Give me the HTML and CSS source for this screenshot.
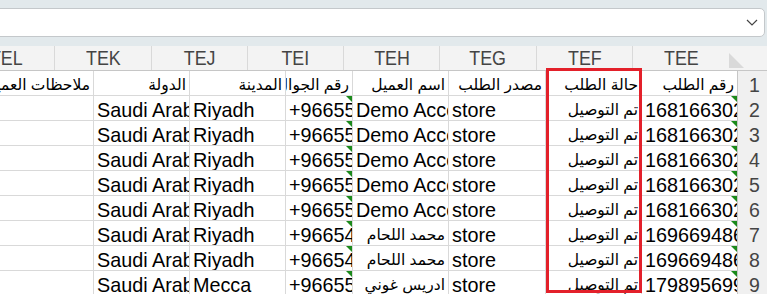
FILE: index.html
```html
<!DOCTYPE html>
<html lang="ar">
  <head>
    <meta charset="UTF-8" />
    <meta name="viewport" content="width=device-width, initial-scale=1.0" />
    <title>Sheet</title>
    <link rel="stylesheet" href="styles.css">
  </head>
  <body>
    <div class="topbar">
      <div class="formula-box">
        <svg class="chevron" width="12" height="7" viewBox="0 0 12 7">
          <polyline points="1,1 6,6 11,1" fill="none" stroke="#444" stroke-width="1.2" />
        </svg>
      </div>
    </div>

    <div class="sheet-wrap">
      <div class="col-heads" dir="rtl">
        <div class="corner">
          <svg width="15" height="15" viewBox="0 0 15 15">
            <polygon points="0,0 0,15 15,15" fill="#d9d9d9" />
          </svg>
        </div>
        <div class="col-head"><span>TEE</span></div>
        <div class="col-head"><span>TEF</span></div>
        <div class="col-head"><span>TEG</span></div>
        <div class="col-head"><span>TEH</span></div>
        <div class="col-head"><span>TEI</span></div>
        <div class="col-head"><span>TEJ</span></div>
        <div class="col-head"><span>TEK</span></div>
        <div class="col-head"><span>TEL</span></div>
      </div>

      <div class="sheet" dir="rtl">
        <!-- row 1: field names -->
        <div class="row-num">1</div>
        <div class="cell ar">رقم الطلب</div>
        <div class="cell ar">حالة الطلب</div>
        <div class="cell ar">مصدر الطلب</div>
        <div class="cell ar">اسم العميل</div>
        <div class="cell ar">رقم الجوال</div>
        <div class="cell ar">المدينة</div>
        <div class="cell ar">الدولة</div>
        <div class="cell ar">ملاحظات العميل</div>

        <div class="row-num">2</div>
        <div class="cell lt flag">1681663021</div>
        <div class="cell ar">تم التوصيل</div>
        <div class="cell lt">store</div>
        <div class="cell lt">Demo Account</div>
        <div class="cell lt flag">+966551234567</div>
        <div class="cell lt">Riyadh</div>
        <div class="cell lt">Saudi Arabia</div>
        <div class="cell"></div>

        <div class="row-num">3</div>
        <div class="cell lt flag">1681663024</div>
        <div class="cell ar">تم التوصيل</div>
        <div class="cell lt">store</div>
        <div class="cell lt">Demo Account</div>
        <div class="cell lt flag">+966551234567</div>
        <div class="cell lt">Riyadh</div>
        <div class="cell lt">Saudi Arabia</div>
        <div class="cell"></div>

        <div class="row-num">4</div>
        <div class="cell lt flag">1681663027</div>
        <div class="cell ar">تم التوصيل</div>
        <div class="cell lt">store</div>
        <div class="cell lt">Demo Account</div>
        <div class="cell lt flag">+966551234567</div>
        <div class="cell lt">Riyadh</div>
        <div class="cell lt">Saudi Arabia</div>
        <div class="cell"></div>

        <div class="row-num">5</div>
        <div class="cell lt flag">1681663029</div>
        <div class="cell ar">تم التوصيل</div>
        <div class="cell lt">store</div>
        <div class="cell lt">Demo Account</div>
        <div class="cell lt flag">+966551234567</div>
        <div class="cell lt">Riyadh</div>
        <div class="cell lt">Saudi Arabia</div>
        <div class="cell"></div>

        <div class="row-num">6</div>
        <div class="cell lt flag">1681663022</div>
        <div class="cell ar">تم التوصيل</div>
        <div class="cell lt">store</div>
        <div class="cell lt">Demo Account</div>
        <div class="cell lt flag">+966551234567</div>
        <div class="cell lt">Riyadh</div>
        <div class="cell lt">Saudi Arabia</div>
        <div class="cell"></div>

        <div class="row-num">7</div>
        <div class="cell lt flag">1696694861</div>
        <div class="cell ar">تم التوصيل</div>
        <div class="cell lt">store</div>
        <div class="cell ar">محمد اللحام</div>
        <div class="cell lt flag">+966541234567</div>
        <div class="cell lt">Riyadh</div>
        <div class="cell lt">Saudi Arabia</div>
        <div class="cell"></div>

        <div class="row-num">8</div>
        <div class="cell lt flag">1696694865</div>
        <div class="cell ar">تم التوصيل</div>
        <div class="cell lt">store</div>
        <div class="cell ar">محمد اللحام</div>
        <div class="cell lt flag">+966541234567</div>
        <div class="cell lt">Riyadh</div>
        <div class="cell lt">Saudi Arabia</div>
        <div class="cell"></div>

        <div class="row-num">9</div>
        <div class="cell lt flag">1798956991</div>
        <div class="cell ar">تم التوصيل</div>
        <div class="cell lt">store</div>
        <div class="cell ar">ادريس غوني</div>
        <div class="cell lt flag">+966551234567</div>
        <div class="cell lt">Mecca</div>
        <div class="cell lt">Saudi Arabia</div>
        <div class="cell"></div>
      </div>

      <!-- highlight around the status column -->
      <div class="highlight"></div>
    </div>
  </body>
</html>
```

FILE: styles.css
```css
* {
  margin: 0;
  padding: 0;
  box-sizing: border-box;
}

body {
  width: 767px;
  height: 294px;
  overflow: hidden;
  background: #fff;
  font-family: "Liberation Sans", "DejaVu Sans", sans-serif;
  color: #000;
}

.topbar {
  height: 46px;
  background: #e2e9ec;
  padding: 8px 2px 9px 0;
}

.formula-box {
  height: 29px;
  margin-left: -10px;
  background: #fff;
  border: 1px solid #c4c8cb;
  border-radius: 5px;
  display: flex;
  align-items: center;
  justify-content: flex-end;
  padding-right: 6px;
}

.sheet-wrap {
  position: relative;
  overflow: hidden;
}

.col-heads {
  display: grid;
  grid-template-columns: 38px 97px 96px 97px 96px 96px 96px 97px 96px;
  height: 25px;
  background: #f3f3f3;
  border-bottom: 1px solid #c6c6c6;
}

.corner {
  display: flex;
  align-items: flex-end;
  justify-content: flex-end;
  padding: 0 12px 2px 0;
}

.col-head {
  border-left: 1px solid #d9d9d9;
  display: flex;
  align-items: center;
  justify-content: center;
  color: #444;
  font-size: 21px;
  white-space: nowrap;
}

.col-head span {
  display: inline-block;
  transform: scaleX(0.85);
}

.sheet {
  display: grid;
  grid-template-columns: 30px 96px 96px 97px 96px 67px 96px 96px 120px;
  grid-auto-rows: 25px;
}

.row-num {
  background: #f0f0f0;
  border-left: 1px solid #c6c6c6;
  color: #444;
  font-size: 19.5px;
  line-height: 28px;
  padding-left: 11px;
  text-align: left;
}

.cell {
  position: relative;
  border-left: 1px solid #d9d9d9;
  border-bottom: 1px solid #d9d9d9;
  overflow: hidden;
  white-space: nowrap;
  line-height: 28px;
  padding: 0 3px;
}

.cell.lt {
  direction: ltr;
  text-align: left;
  font-size: 19.8px;
}

.cell.ar {
  direction: rtl;
  text-align: right;
  font-size: 15.5px;
}

.cell.flag::after {
  content: "";
  position: absolute;
  top: 0;
  right: 0;
  border-top: 6px solid #1b8a1b;
  border-left: 6px solid transparent;
}

.highlight {
  position: absolute;
  top: 22px;
  left: 546px;
  width: 96px;
  height: 225px;
  border: 3px solid #e3202a;
}
```
